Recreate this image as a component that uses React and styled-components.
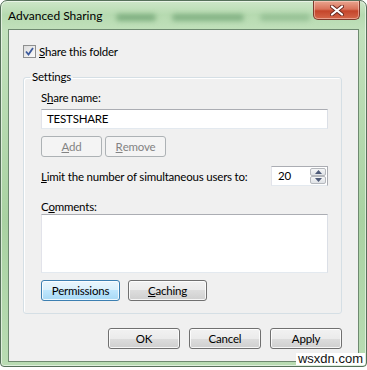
import React from "react";
import styled, { createGlobalStyle } from "styled-components";

const Global = createGlobalStyle`
  html, body { margin: 0; padding: 0; background: #ffffff; }
  body {
    font-family: "Lato", "Noto Sans", sans-serif;
    font-size: 11.5px;
    letter-spacing: -0.2px;
    color: #000;
  }
`;

const Window = styled.div`
  position: relative;
  box-sizing: border-box;
  width: 367px;
  height: 367px;
  border: 1px solid #56705a;
  border-radius: 7px 7px 4px 4px;
  background: linear-gradient(180deg, #cde6c8 0px, #b6dab0 14px, #c2e1bc 30px, #a9d2a2 60%, #b9dcb3 100%);
  box-shadow: inset 0 0 0 1px rgba(255,255,255,0.55);
  display: flex;
  flex-direction: column;
  overflow: hidden;
`;

const TitleBar = styled.div`
  height: 29px;
  display: flex;
  align-items: flex-start;
  padding-left: 7px;
  padding-right: 6px;
`;

const Title = styled.div`
  font-size: 12px;
  letter-spacing: 0;
  line-height: 14px;
  margin-top: 8px;
  color: #000;
  white-space: nowrap;
  flex-shrink: 0;
`;

const Ghost = styled.div`
  flex: 1;
  min-width: 0;
  display: flex;
  gap: 16px;
  margin-top: 13px;
  margin-left: 14px;
  filter: blur(2.5px);
`;

const Smudge = styled.span`
  flex-shrink: 0;
  width: ${p => p.$w}px;
  height: 7px;
  border-radius: 4px;
  background: #5a9260;
  opacity: ${p => p.$o};
`;

const CloseButton = styled.div`
  flex-shrink: 0;
  width: 47px;
  height: 19px;
  box-sizing: border-box;
  border: 1px solid #7d3a2c;
  border-top: none;
  border-radius: 0 0 5px 5px;
  background: linear-gradient(180deg, #e9a58f 0%, #d9735b 45%, #c4452b 55%, #d4674a 100%);
  box-shadow: inset 0 0 0 1px rgba(255,220,210,0.5);
  display: flex;
  align-items: center;
  justify-content: center;
`;

const Client = styled.div`
  margin: 0 7px 4px 7px;
  flex: 1;
  box-sizing: border-box;
  border: 1px solid #6e8a70;
  background: #f0f0f0;
  display: flex;
  flex-direction: column;
  padding: 15px 16px 12px 14px;
`;

const CheckRow = styled.label`
  display: flex;
  align-items: center;
  gap: 3px;
  height: 13px;
  line-height: 13px;
`;

const Box = styled.span`
  width: 13px;
  height: 13px;
  box-sizing: border-box;
  border: 1px solid #8e8f8f;
  background: linear-gradient(135deg, #dcdcdc, #fbfbfb);
  display: flex;
  align-items: center;
  justify-content: center;
`;

const Group = styled.fieldset`
  margin: 12px 0 0 0;
  min-width: 0;
  border: 1px solid #d5dfe5;
  border-radius: 3px;
  box-shadow: inset 1px 1px 0 #ffffff;
  padding: 7px 13px 12px 17px;
  display: flex;
  flex-direction: column;
`;

const Legend = styled.legend`
  padding: 0 2px;
  margin-left: -11px;
  line-height: 14px;
`;

const Label = styled.div`
  line-height: 14px;
  margin-bottom: ${p => p.$mb || 0}px;
  margin-top: ${p => p.$mt || 0}px;
`;

const TextBox = styled.div`
  box-sizing: border-box;
  height: ${p => p.$h || 20}px;
  border: 1px solid #abadb3;
  border-left-color: #e2e3ea;
  border-right-color: #dbdfe6;
  border-bottom-color: #e3e9ef;
  background: #fff;
  padding: 2px 5px;
  line-height: 14px;
`;

const ButtonRow = styled.div`
  display: flex;
  gap: ${p => p.$gap}px;
  margin-top: ${p => p.$mt || 0}px;
  justify-content: ${p => (p.$end ? "flex-end" : "flex-start")};
`;

const Button = styled.div`
  box-sizing: border-box;
  width: ${p => p.$w}px;
  height: 21px;
  border-radius: 3px;
  display: flex;
  align-items: center;
  justify-content: center;
  border: 1px solid ${p => (p.$disabled ? "#adb2b5" : p.$default ? "#3c7fb1" : "#707070")};
  color: ${p => (p.$disabled ? "#838383" : "#000")};
  background: ${p =>
    p.$disabled
      ? "#f4f4f4"
      : p.$default
      ? "linear-gradient(180deg, #eaf6fd 0%, #d9f0fc 50%, #bee6fd 50%, #a7d9f5 100%)"
      : "linear-gradient(180deg, #f2f2f2 0%, #ebebeb 50%, #dddddd 50%, #cfcfcf 100%)"};
  box-shadow: inset 0 0 0 1px ${p => (p.$disabled ? "#f4f4f4" : "rgba(255,255,255,0.8)")};
`;

const LimitRow = styled.div`
  display: flex;
  align-items: center;
  justify-content: space-between;
  margin-top: 9px;
`;

const Spinner = styled.div`
  display: flex;
  box-sizing: border-box;
  width: 57px;
  height: 20px;
  border: 1px solid #abadb3;
  border-bottom-color: #e3e9ef;
  border-left-color: #e2e3ea;
  background: #fff;
`;

const SpinValue = styled.div`
  flex: 1;
  padding: 2px 6px;
  line-height: 14px;
`;

const SpinButtons = styled.div`
  width: 16px;
  display: flex;
  flex-direction: column;
  padding: 1px 1px 1px 0;
`;

const SpinBtn = styled.div`
  flex: 1;
  box-sizing: border-box;
  border: 1px solid #b5b8bd;
  border-radius: 2px;
  background: linear-gradient(180deg, #f5f6f7, #dfe2e6);
  display: flex;
  align-items: center;
  justify-content: center;
`;

const Watermark = styled.div`
  position: absolute;
  right: 1px;
  bottom: 1px;
  background: #ffffff;
  padding: 0 2px;
  font-family: "Liberation Sans", Arial, sans-serif;
  font-size: 13px;
  letter-spacing: 0;
  line-height: 12px;
  color: #111;
`;

const Arrow = ({ up }) => (
  <svg width="7" height="4" viewBox="0 0 7 4">
    <polygon points={up ? "3.5,0 7,4 0,4" : "0,0 7,0 3.5,4"} fill="#4d5a78" />
  </svg>
);

export default function App() {
  return (
    <>
      <Global />
      <Window>
        <TitleBar>
          <Title>Advanced Sharing</Title>
          <Ghost>
            <Smudge $w={40} $o={0.6} />
            <Smudge $w={72} $o={0.55} />
            <Smudge $w={50} $o={0.35} />
          </Ghost>
          <CloseButton>
            <svg width="14" height="11" viewBox="0 0 14 11">
              <path d="M2 1.5 L12 9.5 M12 1.5 L2 9.5" stroke="#6a2a20" strokeWidth="4" strokeLinecap="round" />
              <path d="M2 1.5 L12 9.5 M12 1.5 L2 9.5" stroke="#ffffff" strokeWidth="2.2" strokeLinecap="round" />
            </svg>
          </CloseButton>
        </TitleBar>
        <Client>
          <CheckRow>
            <Box>
              <svg width="9" height="9" viewBox="0 0 9 9">
                <path d="M1 4.5 L3.5 7.5 L8 1" fill="none" stroke="#3c5a9c" strokeWidth="1.8" />
              </svg>
            </Box>
            <span><u>S</u>hare this folder</span>
          </CheckRow>
          <Group>
            <Legend>Settings</Legend>
            <Label $mb={4}>S<u>h</u>are name:</Label>
            <TextBox>TESTSHARE</TextBox>
            <ButtonRow $gap={3} $mt={7}>
              <Button $w={61} $disabled><u>A</u>dd</Button>
              <Button $w={61} $disabled><u>R</u>emove</Button>
            </ButtonRow>
            <LimitRow>
              <span><u>L</u>imit the number of simultaneous users to:</span>
              <Spinner>
                <SpinValue>20</SpinValue>
                <SpinButtons>
                  <SpinBtn><Arrow up /></SpinBtn>
                  <SpinBtn><Arrow /></SpinBtn>
                </SpinButtons>
              </Spinner>
            </LimitRow>
            <Label $mt={14}>C<u>o</u>mments:</Label>
            <TextBox $h={59} />
            <ButtonRow $gap={8} $mt={7}>
              <Button $w={79} $default>Permissions</Button>
              <Button $w={79}><u>C</u>aching</Button>
            </ButtonRow>
          </Group>
          <ButtonRow $gap={9} $mt={14} $end>
            <Button $w={72}>OK</Button>
            <Button $w={72}>Cancel</Button>
            <Button $w={72}>Apply</Button>
          </ButtonRow>
        </Client>
        <Watermark>wsxdn.com</Watermark>
      </Window>
    </>
  );
}
